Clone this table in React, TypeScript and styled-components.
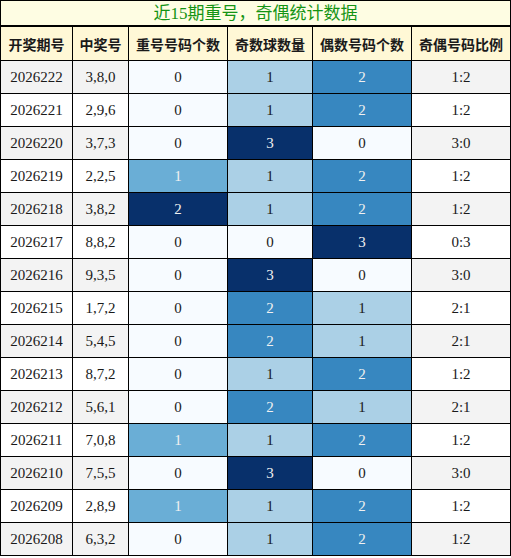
import React from "react";
import styled, { createGlobalStyle } from "styled-components";

const Global = createGlobalStyle`
  html, body { margin: 0; padding: 0; background: #ffffff; }
  body { font-family: "Liberation Serif", "Noto Sans CJK SC", serif; }
`;

const Wrap = styled.div`
  width: 511px;
`;

const Title = styled.div`
  height: 24px;
  border: 1px solid #000;
  border-bottom: 2px solid #000;
  background: #fefde3;
  color: #149414;
  font-family: "Liberation Serif", "Noto Sans CJK SC", serif;
  font-size: 17px;
  line-height: 25px;
  text-align: center;
`;

const Table = styled.table`
  width: 511px;
  border-collapse: separate;
  border-spacing: 0;
  table-layout: fixed;
  border-left: 1px solid #000;
`;

const Th = styled.th<{ $w: number }>`
  box-sizing: border-box;
  width: ${(p) => p.$w}px;
  height: 34px;
  padding: 0;
  border-right: 1px solid #000;
  border-bottom: 1px solid #000;
  background: #fff8d6;
  color: #1a1a1a;
  font-family: "Noto Sans CJK SC", sans-serif;
  font-weight: 700;
  font-size: 14px;
  text-align: center;
  white-space: nowrap;
`;

const Td = styled.td<{ $bg: string; $light?: boolean }>`
  box-sizing: border-box;
  height: 33px;
  padding: 0;
  border-right: 1px solid #000;
  border-bottom: 1px solid #000;
  background: ${(p) => p.$bg};
  color: ${(p) => (p.$light ? "#f1f1f1" : "#1a1a1a")};
  font-family: "Liberation Serif", serif;
  font-size: 15px;
  text-align: center;
`;

const rows: [string, string, number, number, number, string][] = [
  ["2026222", "3,8,0", 0, 1, 2, "1:2"],
  ["2026221", "2,9,6", 0, 1, 2, "1:2"],
  ["2026220", "3,7,3", 0, 3, 0, "3:0"],
  ["2026219", "2,2,5", 1, 1, 2, "1:2"],
  ["2026218", "3,8,2", 2, 1, 2, "1:2"],
  ["2026217", "8,8,2", 0, 0, 3, "0:3"],
  ["2026216", "9,3,5", 0, 3, 0, "3:0"],
  ["2026215", "1,7,2", 0, 2, 1, "2:1"],
  ["2026214", "5,4,5", 0, 2, 1, "2:1"],
  ["2026213", "8,7,2", 0, 1, 2, "1:2"],
  ["2026212", "5,6,1", 0, 2, 1, "2:1"],
  ["2026211", "7,0,8", 1, 1, 2, "1:2"],
  ["2026210", "7,5,5", 0, 3, 0, "3:0"],
  ["2026209", "2,8,9", 1, 1, 2, "1:2"],
  ["2026208", "6,3,2", 0, 1, 2, "1:2"],
];

const repeatColor = ["#f7fbff", "#6aaed6", "#08306b"];
const repeatLight = [false, true, true];
const oddColor = ["#f7fbff", "#abd0e6", "#3787c0", "#08306b"];
const oddLight = [false, false, true, true];

const headers = ["开奖期号", "中奖号", "重号号码个数", "奇数球数量", "偶数号码个数", "奇偶号码比例"];
const widths = [72, 56, 99, 85, 99, 99];

export default function App() {
  return (
    <Wrap>
      <Global />
      <Title>近15期重号，奇偶统计数据</Title>
      <Table>
        <thead>
          <tr>
            {headers.map((h, i) => (
              <Th key={h} $w={widths[i]}>{h}</Th>
            ))}
          </tr>
        </thead>
        <tbody>
          {rows.map((r, i) => {
            const base = i % 2 === 0 ? "#f3f3f3" : "#ffffff";
            return (
              <tr key={r[0]}>
                <Td $bg={base}>{r[0]}</Td>
                <Td $bg={base}>{r[1]}</Td>
                <Td $bg={repeatColor[r[2]]} $light={repeatLight[r[2]]}>{r[2]}</Td>
                <Td $bg={oddColor[r[3]]} $light={oddLight[r[3]]}>{r[3]}</Td>
                <Td $bg={oddColor[r[4]]} $light={oddLight[r[4]]}>{r[4]}</Td>
                <Td $bg={base}>{r[5]}</Td>
              </tr>
            );
          })}
        </tbody>
      </Table>
    </Wrap>
  );
}
